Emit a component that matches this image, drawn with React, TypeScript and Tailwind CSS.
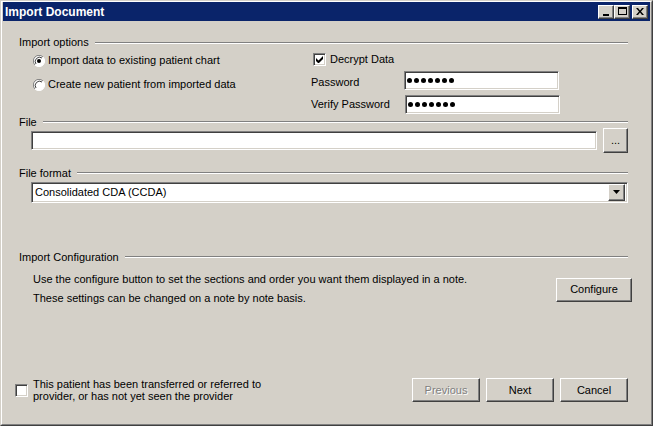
import React from "react";

const sunken =
  "bg-white border border-t-[#808080] border-l-[#808080] border-r-white border-b-white shadow-[inset_1px_1px_0_#404040,inset_-1px_-1px_0_#d4d0c8]";
const raised =
  "bg-[#d4d0c8] border border-t-white border-l-white border-r-[#404040] border-b-[#404040] shadow-[inset_-1px_-1px_0_#808080]";

function GroupLabel({ text, className = "" }: { text: string; className?: string }) {
  return (
    <div className={`flex items-center gap-[6px] h-[13px] ml-[16px] w-[609px] ${className}`}>
      <span className="leading-[13px] whitespace-nowrap">{text}</span>
      <div className="flex-1 h-[2px] border-t border-t-[#808080] border-b border-b-white" />
    </div>
  );
}

function Radio({ checked }: { checked?: boolean }) {
  return (
    <svg width="12" height="12" viewBox="0 0 12 12" className="shrink-0">
      <circle cx="6" cy="6" r="5.5" fill="#fff" />
      <path d="M10 2 A5.5 5.5 0 0 0 2 10" stroke="#808080" strokeWidth="1" fill="none" />
      <path d="M9 3 A4.3 4.3 0 0 0 3 9" stroke="#404040" strokeWidth="1" fill="none" />
      <path d="M2 10 A5.5 5.5 0 0 0 10 2" stroke="#ffffff" strokeWidth="1" fill="none" />
      {checked && <circle cx="6" cy="6" r="2" fill="#000" />}
    </svg>
  );
}

function Check({ checked }: { checked?: boolean }) {
  return (
    <div className={`w-[13px] h-[13px] shrink-0 flex items-center justify-center ${sunken}`}>
      {checked && (
        <svg width="7" height="7" viewBox="0 0 7 7">
          <path d="M0 2v3l2 2h1l4-4V0L2.5 4.5z" fill="#000" />
        </svg>
      )}
    </div>
  );
}

function Dots() {
  return (
    <div className="flex items-center gap-[2px] pl-[2px]">
      {Array.from({ length: 7 }).map((_, i) => (
        <span key={i} className="w-[5px] h-[5px] rounded-full bg-black" />
      ))}
    </div>
  );
}

function TitleButton({ children, className = "" }: { children: React.ReactNode; className?: string }) {
  return (
    <div className={`w-[16px] h-[14px] flex items-center justify-center ${raised} ${className}`}>
      {children}
    </div>
  );
}

function Button({ label, disabled, className = "" }: { label: string; disabled?: boolean; className?: string }) {
  return (
    <div
      className={`h-[24px] flex items-center justify-center ${raised} ${
        disabled ? "text-[#808080] [text-shadow:1px_1px_0_#fff]" : "text-black"
      } ${className}`}
    >
      {label}
    </div>
  );
}

export default function App() {
  return (
    <div className="w-[653px] h-[426px] bg-[#d4d0c8] border border-t-[#d4d0c8] border-l-[#d4d0c8] border-r-[#404040] border-b-[#404040] font-['Liberation_Sans',Arial,sans-serif] text-[11px] text-black">
      <div className="h-full flex flex-col border border-t-white border-l-white border-r-[#808080] border-b-[#808080] px-[1px] pb-[1px]">
        {/* Title bar */}
        <div className="h-[19px] bg-[#0a246a] flex items-center pl-[2px] pr-[2px] shrink-0">
          <span className="text-white font-bold text-[12px] leading-[14px]">Import Document</span>
          <div className="ml-auto flex items-center">
            <TitleButton>
              <div className="w-[6px] h-[2px] bg-black mt-[6px] -ml-[1px]" />
            </TitleButton>
            <TitleButton>
              <div className="w-[9px] h-[8px] border border-black border-t-2 -mt-[1px]" />
            </TitleButton>
            <TitleButton className="ml-[2px]">
              <svg width="8" height="7" viewBox="0 0 8 7">
                <path d="M0 0h2l2 2.5L6 0h2L5 3.5 8 7H6L4 4.5 2 7H0l3-3.5z" fill="#000" />
              </svg>
            </TitleButton>
          </div>
        </div>

        {/* Body */}
        <div className="flex-1 flex flex-col pt-[15px] pb-[21px]">
          <GroupLabel text="Import options" />

          <div className="flex">
            <div className="w-[278px] ml-[30px] flex flex-col">
              <div className="mt-[5px] h-[13px] flex items-center gap-[3px]">
                <Radio checked />
                <span>Import data to existing patient chart</span>
              </div>
              <div className="mt-[11px] h-[13px] flex items-center gap-[3px]">
                <Radio />
                <span>Create new patient from imported data</span>
              </div>
            </div>
            <div className="flex flex-col">
              <div className="mt-[4px] h-[13px] flex items-center gap-[4px] ml-[2px]">
                <Check checked />
                <span>Decrypt Data</span>
              </div>
              <div className="mt-[5px] flex items-center">
                <span className="w-[93px] pt-[3px]">Password</span>
                <div className={`w-[155px] h-[19px] flex items-center ${sunken}`}>
                  <Dots />
                </div>
              </div>
              <div className="mt-[4px] flex items-center">
                <span className="w-[94px]">Verify Password</span>
                <div className={`w-[155px] h-[19px] flex items-center ${sunken}`}>
                  <Dots />
                </div>
              </div>
            </div>
          </div>

          <GroupLabel text="File" className="mt-[2px]" />
          <div className="flex items-center h-[25px] mt-[-1px] ml-[28px]">
            <div className={`w-[566px] h-[19px] ${sunken}`} />
            <Button label="..." className="w-[25px] h-[25px] ml-[6px]" />
          </div>

          <GroupLabel text="File format" className="mt-[14px]" />
          <div className={`mt-[2px] ml-[28px] w-[597px] h-[21px] flex items-center pl-[3px] pr-[2px] ${sunken}`}>
            <span className="flex-1">Consolidated CDA (CCDA)</span>
            <div className={`w-[17px] h-[17px] flex items-center justify-center ${raised}`}>
              <svg width="7" height="4" viewBox="0 0 7 4">
                <path d="M0 0h7L3.5 4z" fill="#000" />
              </svg>
            </div>
          </div>

          <GroupLabel text="Import Configuration" className="mt-[48px]" />
          <div className="flex">
            <div className="ml-[30px] w-[523px] flex flex-col">
              <div className="mt-[9px] h-[13px] leading-[13px]">
                Use the configure button to set the sections and order you want them displayed in a note.
              </div>
              <div className="mt-[6px] h-[13px] leading-[13px]">
                These settings can be changed on a note by note basis.
              </div>
            </div>
            <Button label="Configure" className="mt-[14px] w-[76px]" />
          </div>

          <div className="mt-auto flex items-center h-[24px]">
            <div className="ml-[12px] flex items-center gap-[5px] w-[397px]">
              <Check />
              <div className="leading-[12px]">
                This patient has been transferred or referred to
                <br />
                provider, or has not yet seen the provider
              </div>
            </div>
            <div className="flex gap-[6px]">
              <Button label="Previous" disabled className="w-[68px]" />
              <Button label="Next" className="w-[68px]" />
              <Button label="Cancel" className="w-[68px]" />
            </div>
          </div>
        </div>
      </div>
    </div>
  );
}
